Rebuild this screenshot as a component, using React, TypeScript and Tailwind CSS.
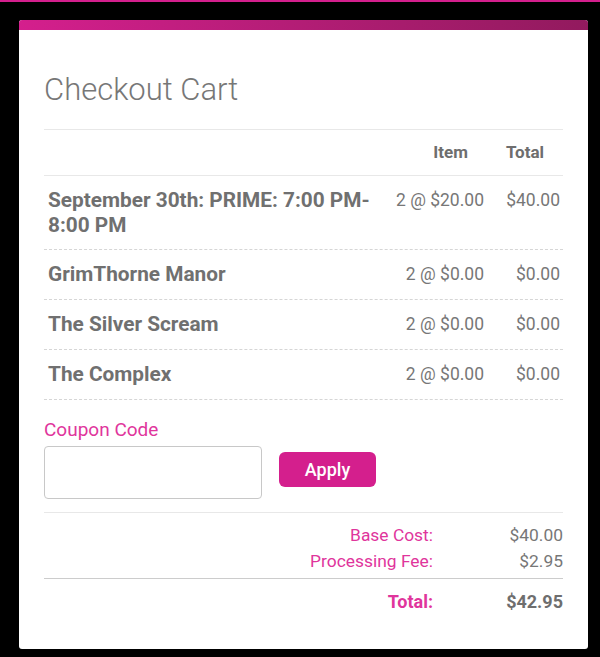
const items = [
  { name: 'September 30th: PRIME: 7:00 PM-8:00 PM', qty: '2 @ $20.00', total: '$40.00' },
  { name: 'GrimThorne Manor', qty: '2 @ $0.00', total: '$0.00' },
  { name: 'The Silver Scream', qty: '2 @ $0.00', total: '$0.00' },
  { name: 'The Complex', qty: '2 @ $0.00', total: '$0.00' },
];

export default function App() {
  return (
    <div className="min-h-[657px] bg-black font-['Roboto',sans-serif] flex flex-col">
      <div className="h-[2px] bg-[#d41f8d]" />
      <div className="ml-[19px] mt-[18px] w-[569px] h-[629px] bg-white rounded-[3px] flex flex-col">
        <div className="h-[10px] rounded-t-[3px] bg-gradient-to-r from-[#d41f8d] to-[#921a5e]" />

        <div className="px-[25px] pt-[40px] flex flex-col">
          <h1 className="text-[31px] leading-[40px] font-light text-[#777777]">Checkout Cart</h1>

          {/* cart table */}
          <div className="mt-[19px] flex flex-col">
            <div className="flex items-center h-[46px] border-t border-[#e8e8e8] text-[17px] font-bold text-[#6e6e6e]">
              <div className="flex-1" />
              <div className="w-[100px] text-right pr-[18px]">Item</div>
              <div className="w-[77px] text-right pr-[19px]">Total</div>
            </div>
            {items.map((it, i) => (
              <div
                key={it.name}
                className={`flex items-start border-t ${i === 0 ? 'border-solid border-[#e8e8e8] pt-3 pb-[11px]' : 'border-dashed border-[#d6d6d6] py-3'}`}
              >
                <div className="flex-1 pl-1 text-[20.8px] leading-[25px] font-bold text-[#707070]">{it.name}</div>
                <div className="w-[100px] pr-[2px] text-right text-[17.5px] leading-[25px] text-[#777777]">{it.qty}</div>
                <div className="w-[77px] pr-[3px] text-right text-[17.5px] leading-[25px] text-[#777777]">{it.total}</div>
              </div>
            ))}
            <div className="border-t border-dashed border-[#d6d6d6]" />
          </div>

          {/* coupon */}
          <label className="mt-[18px] text-[19px] leading-[24px] text-[#e0359c]">Coupon Code</label>
          <div className="mt-1 flex items-start gap-[17px]">
            <input className="w-[218px] h-[53px] border border-[#c8c8c8] rounded-[4px] outline-none px-3" />
            <button className="mt-[6px] w-[97px] h-[35px] rounded-[6px] bg-[#d41f8d] text-white text-[18px] font-medium">
              Apply
            </button>
          </div>

          {/* totals */}
          <div className="mt-[13px] border-t border-[#e8e8e8] pt-[9px] flex flex-col text-[17.4px] leading-[26px]">
            <div className="flex">
              <div className="flex-1 text-right text-[#e0359c]">Base Cost:</div>
              <div className="w-[130px] text-right text-[#777777]">$40.00</div>
            </div>
            <div className="flex">
              <div className="flex-1 text-right text-[#e0359c]">Processing Fee:</div>
              <div className="w-[130px] text-right text-[#777777]">$2.95</div>
            </div>
            <div className="mt-[4px] border-t border-[#cccccc]" />
            <div className="mt-[10px] flex font-bold text-[18px]">
              <div className="flex-1 text-right text-[#e0359c]">Total:</div>
              <div className="w-[130px] text-right text-[#6e6e6e]">$42.95</div>
            </div>
          </div>
        </div>
      </div>
    </div>
  );
}
